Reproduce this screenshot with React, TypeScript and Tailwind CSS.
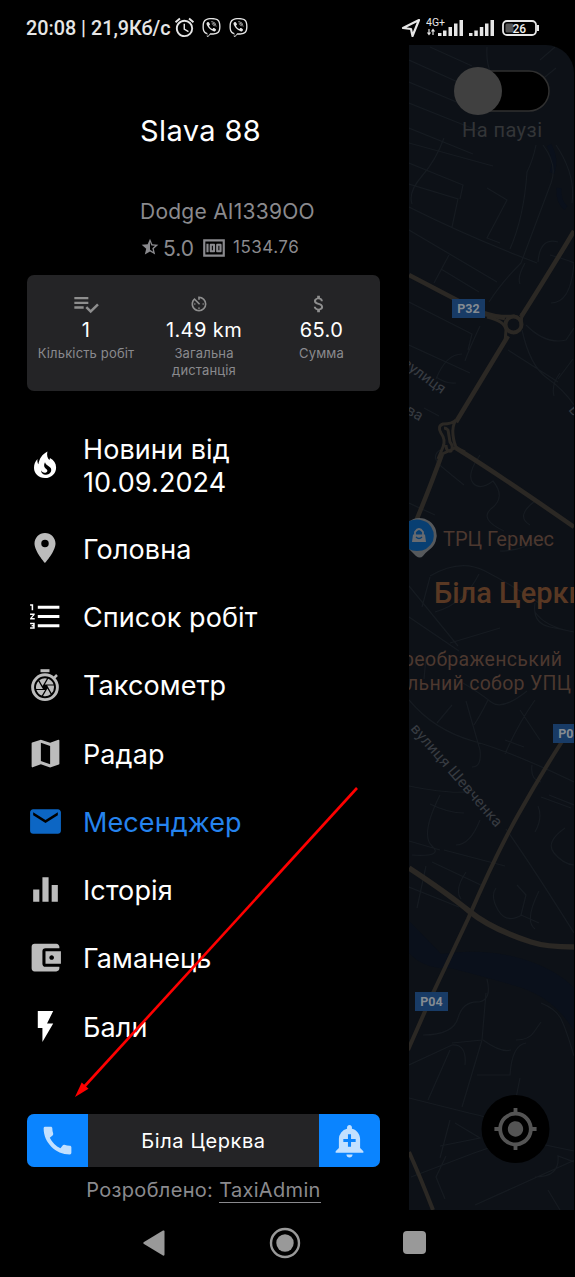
import type { ReactNode } from 'react';
import {
  MdAccessAlarm, MdAccountBalanceWallet, MdAddAlert, MdAttachMoney, MdAvTimer, MdCall, MdCamera,
  MdEqualizer, MdFlashOn, MdFormatListNumbered, MdMail, MdMap, MdMoney, MdMyLocation, MdPlace, MdStarHalf,
} from 'react-icons/md';
import { FaViber } from 'react-icons/fa';

function Flame() {
  return (
    <svg width="32" height="32" viewBox="0 0 32 32" fill="currentColor">
      <path d="M18.400 1.400c-.8 4 0 6.600 2 8.600.4-.6.6-1.300.5-2 4 2.300 6.200 5.300 6.200 9.400C27.100 23.500 22.400 28 16 28S5 23.700 5 17.800c0-3.400 1.100-6.400 3.500-8.800-.3 2.300 0 4 .9 5.200C10.300 8.700 13 4.300 18.400 1.400z" />
      <path className="fill-black" d="M16 12.300c-1.800 3.400-.5 5.400 1.300 6.700 1.600 1.200 1.400 2.700-.2 3.400-2.100.8-4.300-.2-5-2.200-.1 3 2.200 4.700 5 4.500 3.300-.3 5.400-2.600 5.100-5.300-.3-2.900-5.200-3.600-6.200-7.100z" />
    </svg>
  );
}

function ShutterTimer() {
  return (
    <svg width="32" height="34" viewBox="0 0 32 34" fill="none">
      <path d="M11.500 2.700h9" stroke="currentColor" strokeWidth="3" />
      <path d="M25 10l3-3" stroke="currentColor" strokeWidth="2.500" />
      <circle cx="16" cy="19.200" r="12.400" stroke="currentColor" strokeWidth="2.900" />
      <g transform="translate(5.200 8.400)"><MdCamera size={21.600} /></g>
    </svg>
  );
}

function PlaylistCheck() {
  return (
    <svg width="28" height="28" viewBox="0 0 24 24" fill="currentColor">
      <path d="M14 10H2v2h12v-2m0-4H2v2h12V6M2 16h8v-2H2v2m19.500-4.500L23 13l-7 7-4.500-4.500L13 14l3 3 5.500-5.500z" />
    </svg>
  );
}

function Signal() {
  return (
    <svg width="26" height="18" viewBox="0 0 26 18" fill="#e6e6e6">
      <path d="M0 14h3.500v3H0zM5.300 11.500h3.500V17H5.300zM10.800 8h3.500v9h-3.500zM16 4.500h3.500V17H16zM21.500 1H25v16h-3.500z" />
    </svg>
  );
}

function StatusBar() {
  return (
    <header className="flex h-[45px] items-start pl-[26px] pr-[36px] pt-4 font-[Roboto,sans-serif] text-[#e6e6e6]">
      <span className="mt-px w-[147px] whitespace-nowrap text-[19.800px] font-medium leading-6">20:08 | 21,9Кб/с</span>
      <MdAccessAlarm size={23} />
      <FaViber size={19} className="ml-[6px] mt-[2px]" />
      <FaViber size={19} className="ml-[8px] mt-[2px]" />
      <div className="flex-1" />
      <svg width="20" height="20" viewBox="0 0 20 20" className="mt-[2px]" fill="none" stroke="currentColor" strokeWidth="2.200" strokeLinejoin="round">
        <path d="M18 2L2 10l8 1 1.500 7z" />
      </svg>
      <svg width="40" height="22" viewBox="0 0 40 22" className="ml-[5px]" fill="currentColor">
        <text x="0" y="10" fontSize="10.500" fontFamily="Roboto">4G+</text>
        <path d="M3 13v5M1.500 16.500L3 18.500l1.500-2M7 19v-5M5.500 15.500L7 13.500l1.500 2" stroke="currentColor" fill="none" strokeWidth="1.200" />
        <path d="M12 17h3.500v3H12zM17 14.500h3.500V20H17zM22.500 11H26v9h-3.500zM28 7.500h3.500V20H28zM33.500 4H37v16h-3.500z" />
      </svg>
      <div className="ml-[3px] mt-[3px]"><Signal /></div>
      <svg width="37" height="18" viewBox="0 0 37 18" className="ml-[7px] mt-[3px]">
        <rect x="1" y="2" width="33" height="14" rx="4" fill="none" stroke="#e6e6e6" strokeWidth="1.800" />
        <rect x="3.500" y="4.500" width="8" height="9" rx="1.500" fill="#555" />
        <path d="M36 6v6" stroke="#e6e6e6" strokeWidth="2" />
        <text x="10.500" y="13.500" fontSize="12" fontWeight="500" fontFamily="Roboto" fill="#f0f0f0">26</text>
      </svg>
    </header>
  );
}

function Stat({ icon, value, label, className }: { icon: ReactNode; value: string; label: string; className: string }) {
  return (
    <div className={`flex flex-col items-center text-center ${className}`}>
      <div className="flex h-7 items-center text-[#8e8e8e]">{icon}</div>
      <div className="text-[20px] leading-[24px] tracking-[0.400px] text-white">{value}</div>
      <div className="mt-[3px] text-[13px] leading-[17px] tracking-[0.150px] text-[#8a8a8e]">{label}</div>
    </div>
  );
}

const items: { icon: ReactNode; label: string; tone: string; text: string }[] = [
  { icon: <MdPlace size={36} />, label: 'Головна', tone: 'text-[#bcbcbc]', text: 'text-white' },
  { icon: <MdFormatListNumbered size={37} />, label: 'Список робіт', tone: 'text-white', text: 'text-white' },
  { icon: <ShutterTimer />, label: 'Таксометр', tone: 'text-[#bcbcbc]', text: 'text-white' },
  { icon: <MdMap size={37} />, label: 'Радар', tone: 'text-[#bcbcbc]', text: 'text-white' },
  { icon: <MdMail size={37} />, label: 'Месенджер', tone: 'text-[#0c66c4]', text: 'text-[#2583ee]' },
  { icon: <MdEqualizer size={37} />, label: 'Історія', tone: 'text-[#bcbcbc]', text: 'text-white' },
  { icon: <MdAccountBalanceWallet size={37} />, label: 'Гаманець', tone: 'text-[#bcbcbc]', text: 'text-white' },
  { icon: <MdFlashOn size={37} />, label: 'Бали', tone: 'text-white', text: 'text-white' },
];

function Drawer() {
  return (
    <aside className="flex w-[409px] shrink-0 flex-col pl-[27px] pr-[29px]">
      <div className="pl-[113px] pt-[70px]">
        <h1 className="text-[29px] leading-8 tracking-[0.400px] text-white">Slava 88</h1>
        <p className="mt-[51px] text-[21px] leading-7 tracking-[0.250px] text-[#8a8a8e]">Dodge AI1339OO</p>
        <div className="mt-[8px] flex h-7 items-center text-[#8a8a8e]">
          <MdStarHalf size={20} className="-mt-[2px]" />
          <span className="ml-[3px] mt-[2px] text-[21px] leading-7">5.0</span>
          <MdMoney size={26} className="ml-[7px]" />
          <span className="-mt-[2px] ml-[6px] text-[17px] leading-6 tracking-[0.500px]">1534.76</span>
        </div>
      </div>
      <section className="mt-[13px] flex h-[116px] shrink-0 rounded-[7px] bg-[#242426] pt-[15px]">
        <Stat className="w-[118px]" icon={<PlaylistCheck />} value="1" label="Кількість робіт" />
        <Stat className="w-[118px] px-4" icon={<MdAvTimer size={20} className="mr-[10px]" />} value="1.49 km" label="Загальна дистанція" />
        <Stat className="w-[117px]" icon={<MdAttachMoney size={22} className="mr-[6px]" />} value="65.0" label="Сумма" />
      </section>
      <nav className="mt-[25px] text-[27px] leading-[33px] tracking-[0.100px]">
        <div className="flex h-[99px] items-center text-white">
          <div className="flex w-[36px] justify-center"><Flame /></div>
          <div className="ml-[20px] w-[170px]">Новини від 10.09.2024</div>
        </div>
        {items.map((item) => (
          <div key={item.label} className="flex h-[68.300px] items-center">
            <div className={`-mt-[2px] flex w-[36px] justify-center ${item.tone}`}><span className="shrink-0">{item.icon}</span></div>
            <div className={`ml-[20px] ${item.text}`}>{item.label}</div>
          </div>
        ))}
      </nav>
      <div className="mt-[52.600px] flex h-[53px] shrink-0 overflow-hidden rounded-[7px] bg-[#242426]">
        <button className="flex w-[61px] items-center justify-center bg-[#0a84ff] text-[#c2e0ff]"><MdCall size={37} /></button>
        <div className="flex flex-1 items-center justify-center pt-[2px] text-[20px] tracking-[0.600px] text-white">Біла Церква</div>
        <button className="flex w-[61px] items-center justify-center bg-[#0a84ff] text-[#c2e0ff]"><MdAddAlert size={37} /></button>
      </div>
      <p className="mt-[10px] text-center text-[20px] leading-[26px] tracking-[0.320px] text-[#8a8a8e]">
        Розроблено: <a className="inline-block border-b border-[#8a8a8e] leading-[24px]">TaxiAdmin</a>
      </p>
    </aside>
  );
}

function RoadSign({ x, y, label }: { x: number; y: number; label: string }) {
  return (
    <g>
      <rect x={x} y={y} width="33" height="19" fill="#183b66" />
      <text x={x + 16.500} y={y + 14} textAnchor="middle" fontSize="12.500" fontWeight="700" fill="#858b92">{label}</text>
    </g>
  );
}

function CityMap() {
  return (
    <svg width="165" height="1165" viewBox="409 45 165 1165" fontFamily="Roboto, sans-serif">
      <rect x="409" y="45" width="165" height="1165" fill="#0d1117" />
      <path d="M409 921q22 22 32 33 42-6 78 4t55 30v43q-20-34-58-45t-66-18q-25 2-41-15z" fill="#0a101b" />
      <path d="M549 145q8 14 3 28M559 188q-1 14 7 20" fill="none" stroke="#0a101b" strokeWidth="5" />
      <g fill="none" stroke="#161b21" strokeWidth="1.200">
        <path d="M409 60l91 41M430 47l42 19M409 82l76 32M409 103l70 28M409 128l64 26M409 143l84 23M409 163l54 22-3 14M409 184l49 15-6 28M409 207q60 30 128 56M409 230l88 52M444 138q-8 22-22 38t-10 28" />
        <path d="M487 47q-2 30 18 42M536 145q-3 15-9 27-3 45-17 77M543 145q15 20 8 38l-30 80q-20 20-32 39M487 188l20 12-20 38 13 5M556 145q20 30 16 58M540 60l15-13M534 86l22-18" />
        <path d="M449 255l-15 28M441 269l38 23M409 302l63 32-4 16M480 326q-13 28-15 35M436 379q10-25 26-25M525 263q-8 14-5 21M538 262q2-25 20-20M550 255q18 5 24 8-3 40-23 40M526 325q20 20 40 15l8-12" />
        <path d="M522 330q8 36 25 48t27 27M409 345l61 28M436 377q10 7 20 6M424 408l15 8M560 373q-9 12-6 23M573 359l-15 20M508 350l50 32" />
        <path d="M440 450q-10 7 2 17t22 18M480 455q-14 20-7 28t20-2q13 16-1 27t12 23M535 501q-20 15-5 24M409 503q15 7 26 12M550 535q-30 17-50 16M430 576q30-18 55-5t54 32M409 586l49 60M430 577l-8 30M479 574q-15 30-44 38M500 628l-50 15M535 603q-3 20 15 24l24 5M535 612q10 15 39 20M409 617l50 34M426 657l-2 22M463 683q17 10 28 19t36-11" />
        <path d="M409 700q25 30 64 41t101 41M466 701l14 49q2 17-8 17M535 700q-17 24-30 54M488 700q-8 16-14 25M505 740l19 7M520 710l20 30M437 723l15-18M549 795l25 10M532 765q-2 15 9 17M541 797l30 11M409 786q50 10 65 4M440 795q-20 40-8 51t-20 9M430 804q18 9 34 9M480 820q-10 25-24 25M409 841l31 9M444 850l61 16M538 806q5 12-3 26M565 828q-20 14-11 25t20 12M506 829q28 40 68 104" />
        <path d="M409 887l50 20M432 862l51 24M426 866l-9 42M466 872q-12 18-5 27M496 888q-6 8 2 22t24 5M517 885l9 10-5 20 18 8M539 891q-15 30-4 38M409 1065l43-20q15-1 13 20M452 1043l30-3 4-47M409 1098l60 15q35 7 65 27M450 1050l-22 50M482 1040l-20 67M477 1075h33q2-30 16-32M520 1078l-5 25" />
        <path d="M411 1177l63-24q33-12 72-21M450 1120l-10 38M455 1123l25 15-40 8M446 1156l-10 21 9 22M475 1205l100-45M535 1177q25 0 23-21l16 6M507 1137l67 14M548 1190l12 20M423 1035q30 0 35-17t21-16q13-2 8-23M511 1050q-10 3-28-10M516 1040q13 0 18-8l7-10M541 1003q15 6 20 16t13 37" />
      </g>
      <g fill="none" stroke="#2b2824" strokeLinejoin="round">
        <path d="M409 275l65 34q12 6 31 9M574 231q-22 37-53 86M508 336l-52 86M442 454q-12 34-33 84M456 448q45 28 118 79" strokeWidth="4.500" />
        <circle cx="513.500" cy="324.500" r="8" strokeWidth="4" />
        <path d="M485 315q20 2 30 1M522 313l-1 12M487 317q18 4 19 13l-1 12" strokeWidth="3" />
        <path d="M456 420q-4 4-13 4-6 2-2 9 5 7 2 14l-5 12M456 420q-4 6-3 15t4 14M440 455l15-7 10 4M444 428q2 0 4 2l2 12q4 5 1 9-5 1-5-6" strokeWidth="3" />
        <path d="M563 740q-22 34-45 75t-50 104q-20 42-35 74l-25 57" strokeWidth="4" />
        <path d="M409 868q38 25 60 43t62 31q15 5 43 5" strokeWidth="5.500" />
        <path d="M409 1152q10 22 24 58" strokeWidth="4" />
      </g>
      <RoadSign x={452} y={299} label="P32" />
      <RoadSign x={415} y={992} label="P04" />
      <RoadSign x={553} y={724} label="P04" />
      <g fill="#383c42" fontSize="15">
        <text transform="translate(401 365) rotate(36)">вулиця</text>
        <text transform="translate(405 413) rotate(30)">ва</text>
        <text transform="translate(568 410) rotate(50)" fontSize="15">В</text>
        <text transform="translate(410 729) rotate(49)" textLength="131">вулиця Шевченка</text>
      </g>
      <g fill="#4c382f">
        <text x="443" y="546" fontSize="20" textLength="111">ТРЦ Гермес</text>
        <text x="434" y="603" fontSize="29" fontWeight="500" fill="#593823">Біла Церква</text>
        <text x="403" y="666" fontSize="19.500" textLength="159">реображенський</text>
        <text x="407" y="690" fontSize="19.500" textLength="164">льний собор УПЦ</text>
      </g>
      <path d="M419 518a17.500 17.500 0 0 1 10 32q-4 3-6 6-3 3-7 0l-7-7v-27q4-4 10-4z" fill="#56595c" />
      <path d="M409 521q10-4 19 2 8 8 5 18-5 10-16 10-5 0-8-2z" fill="#083f72" />
      <path d="M415 535v-3q4-6 8 0v3" fill="none" stroke="#686b70" strokeWidth="1.800" />
      <path d="M413 534.500h12l1 7.500h-14z" fill="#686b70" />
      <path d="M416 537q3 3 6 0" stroke="#083f72" strokeWidth="1.300" fill="none" />
      <rect x="457" y="71" width="92" height="40" rx="20" fill="#000" stroke="#303030" strokeWidth="1.500" />
      <circle cx="478" cy="91" r="24" fill="#404040" />
      <text x="462" y="137" fontSize="20" fill="#333537" textLength="80">На паузі</text>
      <circle cx="515.500" cy="1129" r="34" fill="#000" />
      <g transform="translate(492.500 1106)" color="#545454"><MdMyLocation size={46} /></g>
    </svg>
  );
}

export default function App() {
  return (
    <div className="relative flex h-[1277px] w-[575px] flex-col overflow-hidden bg-black font-[Inter,sans-serif]">
      <StatusBar />
      <main className="flex h-[1165px]">
        <Drawer />
        <div className="h-[1165px] w-[165px] overflow-hidden rounded-tr-[28px]"><CityMap /></div>
      </main>
      <footer className="flex h-[67px] items-center pb-[2px] pl-[143px] text-[#999]">
        <svg width="22" height="26" viewBox="0 0 22 26" fill="currentColor"><path d="M20 .5q1.500-.5 1.500 1v23q0 1.500-1.500 1L1 14q-1.500-1 0-2z" /></svg>
        <svg width="32" height="32" viewBox="0 0 32 32" className="ml-[104px]" fill="none">
          <circle cx="16" cy="16" r="14" stroke="currentColor" strokeWidth="2.400" />
          <circle cx="16" cy="16" r="8.700" fill="currentColor" />
        </svg>
        <div className="ml-[102px] size-[23px] rounded-[4px] bg-[#999]" />
      </footer>
      <svg className="pointer-events-none absolute left-0 top-0" width="575" height="1277" viewBox="0 0 575 1277">
        <path d="M357 788L83 1088" stroke="#f00" strokeWidth="2.600" />
        <path d="M75 1097l6.700-14.500 6.800 6.200z" fill="#f00" />
      </svg>
    </div>
  );
}
